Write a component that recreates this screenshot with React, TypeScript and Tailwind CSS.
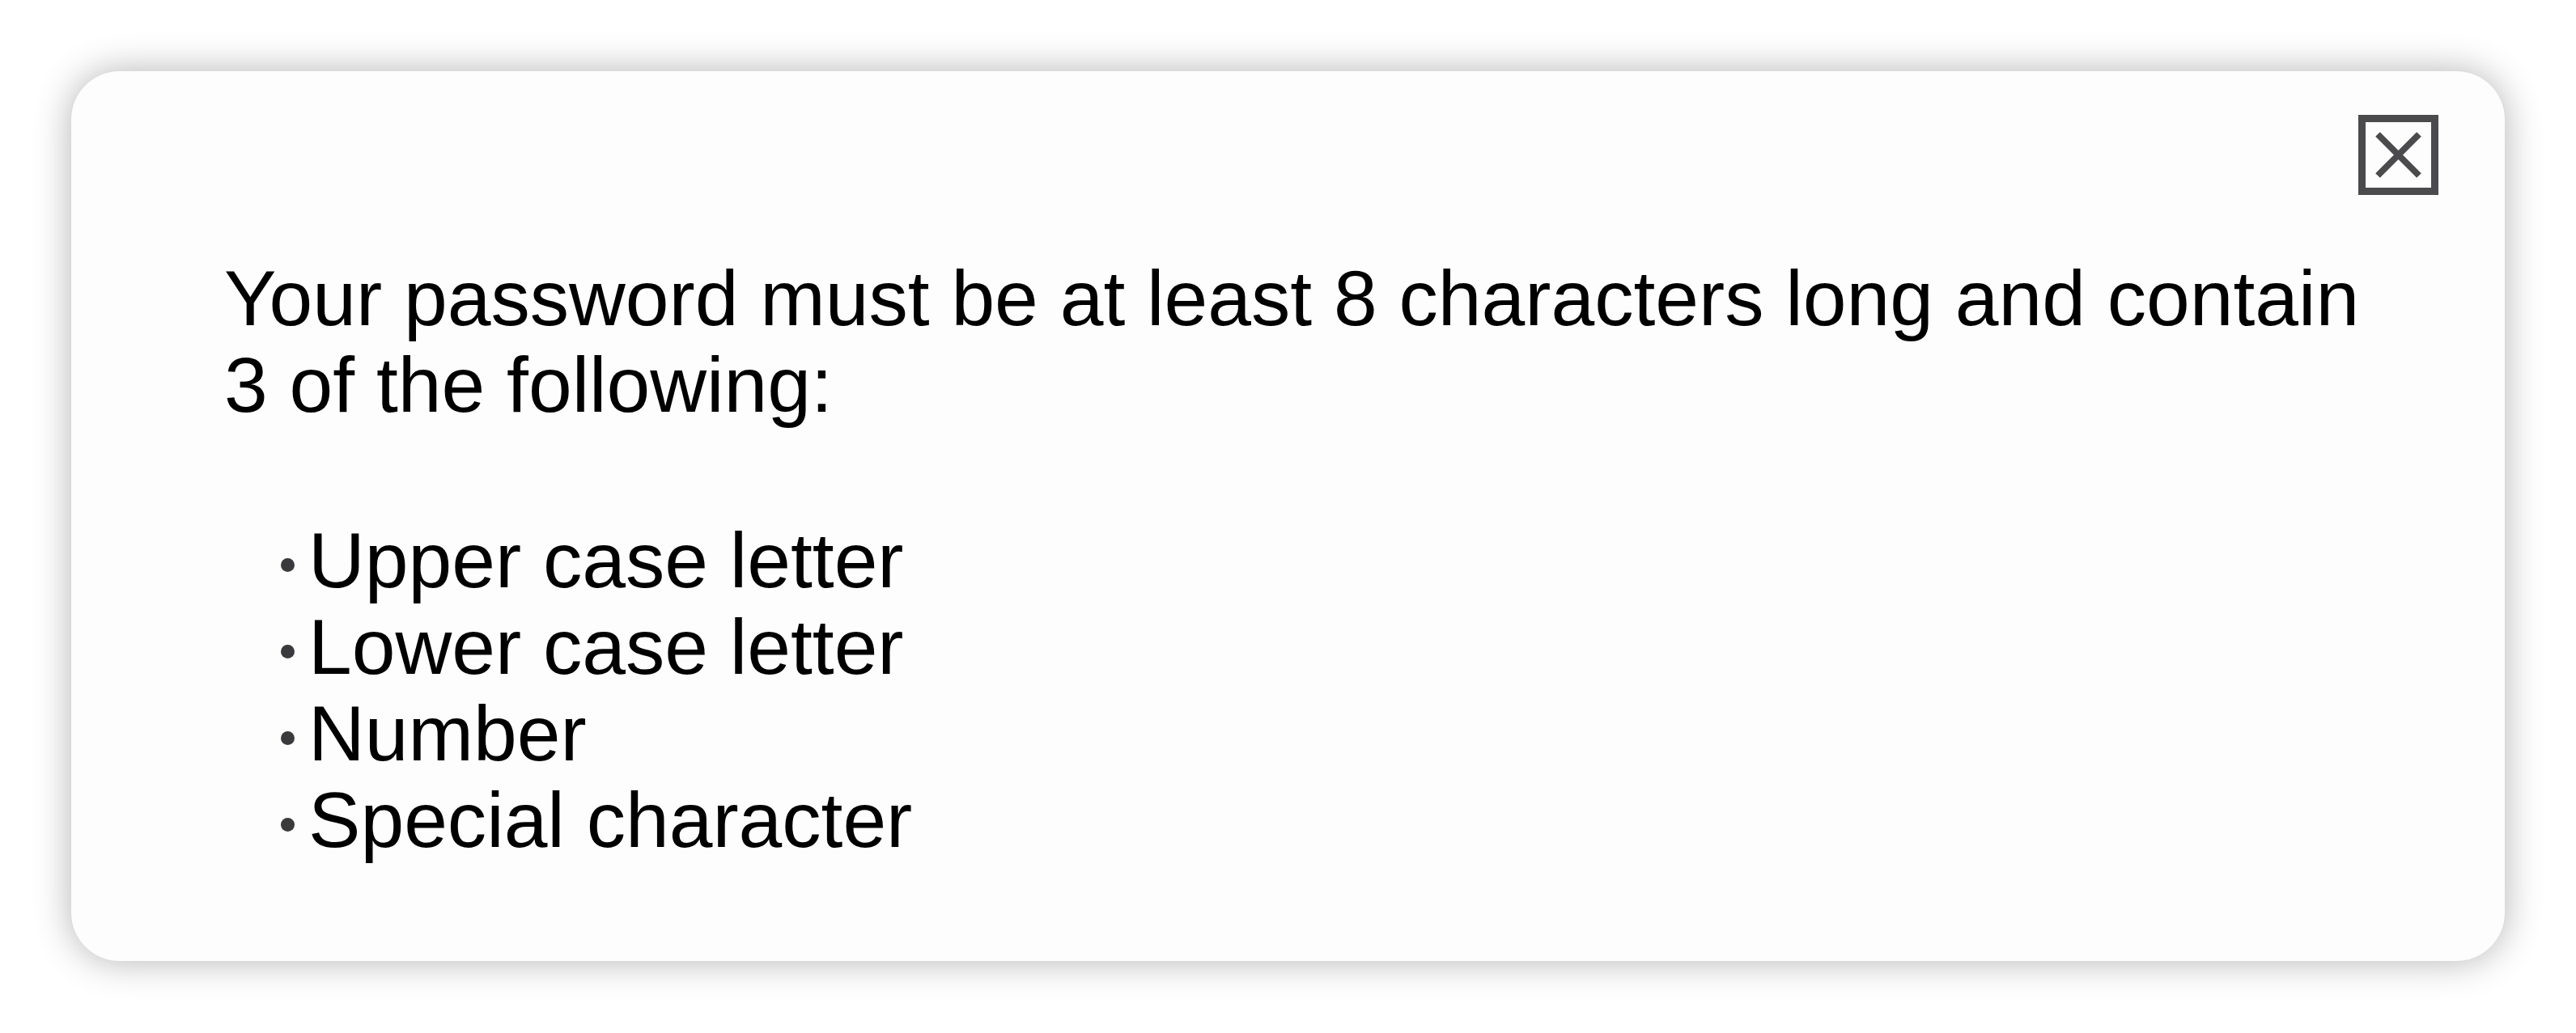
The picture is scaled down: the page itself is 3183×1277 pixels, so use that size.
import React from "react";

export default function App() {
  const items = ["Upper case letter", "Lower case letter", "Number", "Special character"];
  return (
    <div className="w-[3183px] h-[1277px] bg-white p-[88px] box-border" style={{ fontFamily: '"Liberation Sans", Arial, sans-serif' }}>
      <div className="w-[3007px] h-[1100px] rounded-[60px] bg-[#fdfdfd] shadow-[0_0_46px_rgba(0,0,0,0.3)] flex flex-col pl-[189px] pr-[82px] pt-[54px] box-border">
        <div className="flex justify-end">
          <button className="w-[99px] h-[99px] border-[9px] border-[#4b4b4d] bg-transparent p-0 flex items-center justify-center box-border" aria-label="Close">
            <svg width="81" height="81" viewBox="0 0 81 81">
              <line x1="15" y1="15" x2="66" y2="66" stroke="#4b4b4d" strokeWidth="8" />
              <line x1="66" y1="15" x2="15" y2="66" stroke="#4b4b4d" strokeWidth="8" />
            </svg>
          </button>
        </div>
        <div className="w-[2700px] mt-[74px] text-[96.6px] leading-[107px] text-black">
          <p>Your password must be at least 8 characters long and contain 3 of the following:</p>
          <ul className="mt-[110px]">
            {items.map((t) => (
              <li key={t} className="flex items-center">
                <span className="ml-[70px] mr-[17px] w-[17px] h-[17px] rounded-full bg-[#3a3a3c] mt-[12px]" />
                <span>{t}</span>
              </li>
            ))}
          </ul>
        </div>
      </div>
    </div>
  );
}
